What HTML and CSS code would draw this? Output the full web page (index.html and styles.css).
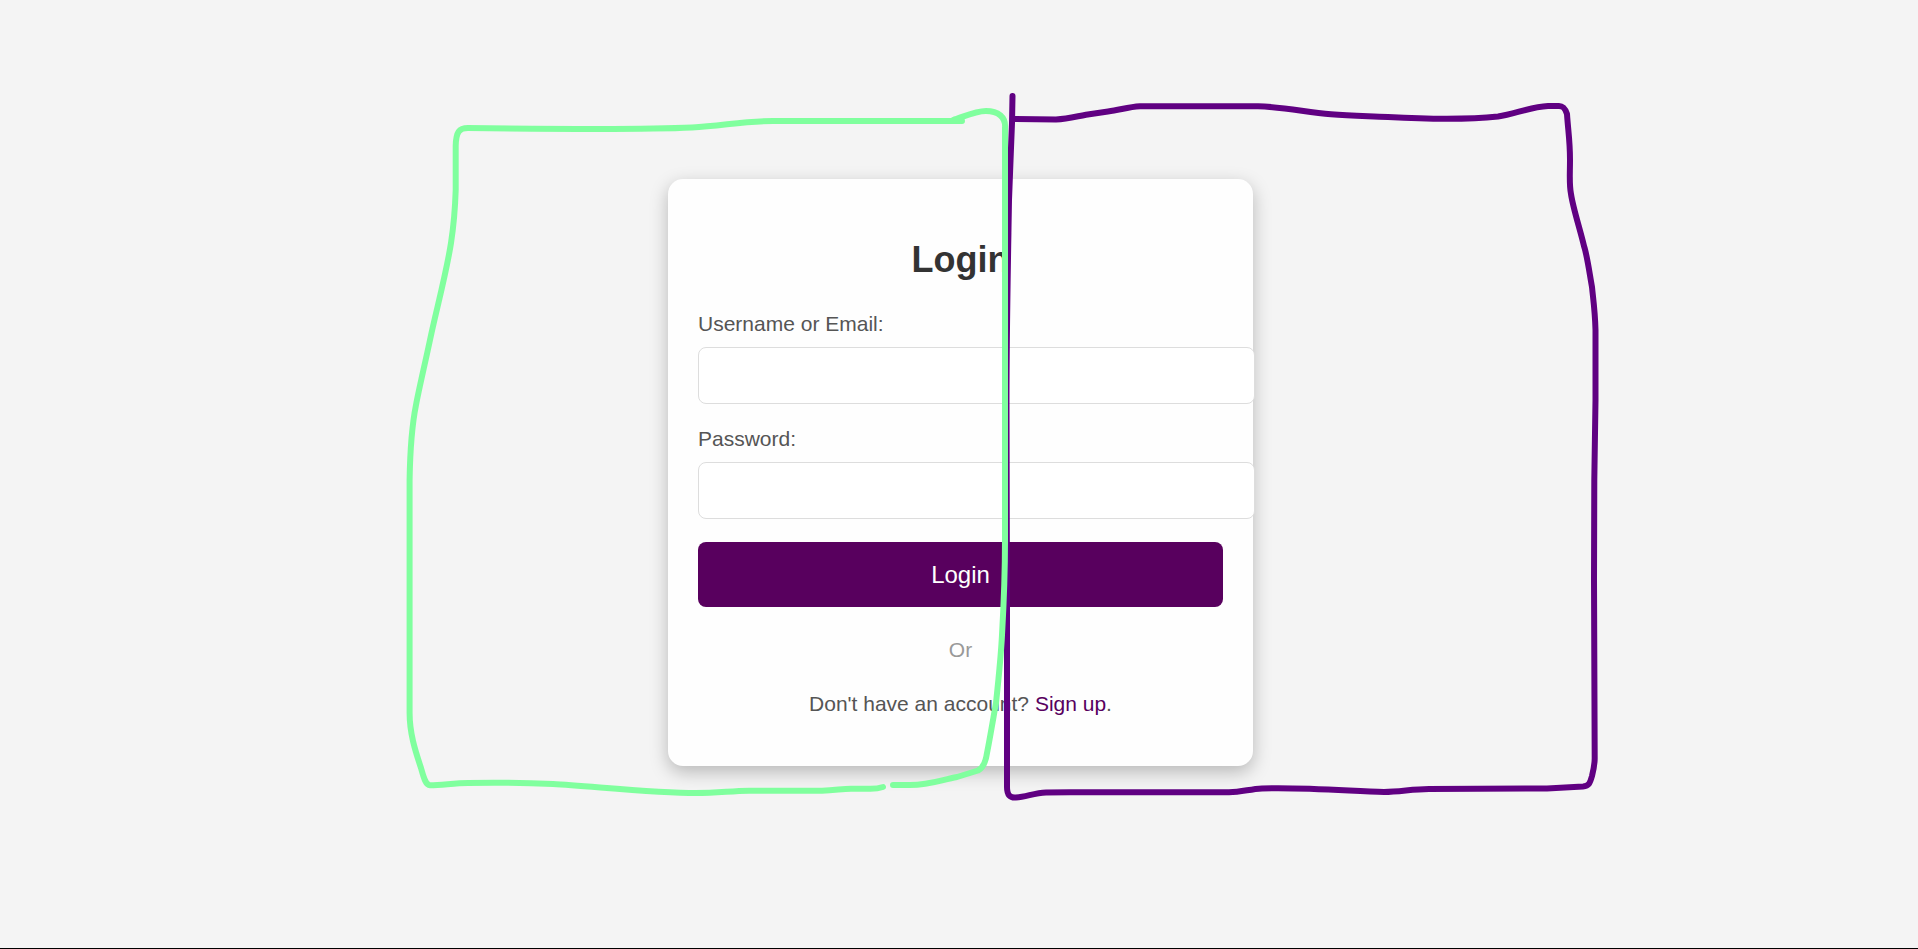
FILE: index.html
```html
<!DOCTYPE html>
<html lang="en">
<head>
<meta charset="utf-8">
<meta name="viewport" content="width=device-width, initial-scale=1">
<title>Login</title>
<link rel="stylesheet" href="styles.css">
</head>
<body>
<main class="page">
  <section class="card">
    <h1 class="card-title">Login</h1>
    <form class="form">
      <div class="field">
        <label class="field-label" for="username">Username or Email:</label>
        <input class="field-input" type="text" id="username" name="username">
      </div>
      <div class="field">
        <label class="field-label" for="password">Password:</label>
        <input class="field-input" type="password" id="password" name="password">
      </div>
      <button class="submit" type="submit">Login</button>
    </form>
    <p class="divider">Or</p>
    <p class="signup">Don't have an account? <a class="signup-link" href="#signup">Sign up</a>.</p>
  </section>
</main>
<svg class="ink" viewBox="0 0 1918 949" aria-hidden="true">
  <g class="ink-purple">
    <path d="M1012.500 96L1012 123C1011 150 1010 170 1009 200C1008 260 1006.500 330 1006.500 400L1007 613V787C1007 795 1010 798 1016 797.500C1026 797 1034 793 1046 792.500L1070 792.300H1229C1242 792 1250 789 1262 788.400C1305 787 1350 791 1384 792C1400 792 1412 789 1429 789L1547 788.400L1583 786.500C1589 786 1590 783 1592 776C1594 768 1594.700 764 1594.700 758L1594 580L1594.300 480L1595.500 400V330C1595 310 1593 298 1592 287C1589 270 1587 255 1584 246C1580 229 1573 208 1571 194C1569 184 1570 175 1570 160C1570 140 1568 130 1567 114C1565 108 1563 106 1559 106H1548C1530 107 1515 114 1498 116.500C1465 120 1425 119 1388 117C1365 116 1350 116 1331 114.300C1305 112 1285 107 1258 106.300H1140C1128 107 1120 110 1108 111.500L1086 114.700C1074 117 1067 119 1056 119.500L1014 119"/>
  </g>
  <g class="ink-green">
    <path d="M962 121H773C743 121 722 126 692 127.500C640 130 550 129 468 128C459 128 456 132 455.700 146V190C455 212 453 230 451 243C446 275 436 311 430 340C424 368 419 389 416 405C411 430 410 455 409.600 480V713C409.600 733 415 750 421 768C424 779 426 785 430 785.300C443 785 455 783 468 783C500 782.500 530 783 553 784C590 786 655 793 696 793C718 793 730 791 749 790.700H822C835 790.700 841 788.700 851 788.700H868C876 789 880 788 883 787"/>
    <path d="M893 785H910C930 785 941 780 957 777L978 770.500C983 768 986 760 987 753C990 738 994 714 996 703C999 675 1001 655 1002 635C1004 600 1005 575 1005 540V128C1006 117 998 111 986 111C975 111 963 117 953 120"/>
  </g>
</svg>
</body>
</html>
```
FILE: styles.css
```css
* {
  box-sizing: border-box;
}

body {
  margin: 0;
  font-family: Arial, "Liberation Sans", sans-serif;
  font-size: 21px;
  line-height: 24px;
  color: #555;
  background: #f4f4f4;
}

.page {
  display: flex;
  align-items: center;
  justify-content: center;
  min-height: 100vh;
  padding: 0 0 3px 3px;
  border-bottom: 1px solid #000;
}

.card {
  width: 585px;
  padding: 60px 30px 50px;
  background: #fefefe;
  border-radius: 15px;
  box-shadow: 0 6px 18px rgba(0, 0, 0, 0.25);
}

.card-title {
  margin: 0 0 32px;
  font-size: 36px;
  line-height: 41px;
  text-align: center;
  color: #333;
}

.form {
  display: flex;
  flex-direction: column;
  gap: 23px;
}

.field {
  display: flex;
  flex-direction: column;
  gap: 11px;
}

.field-input {
  width: calc(100% + 32px);
  height: 57px;
  padding: 15px;
  font: inherit;
  color: #333;
  background: #fff;
  border: 1px solid #ddd;
  border-radius: 8px;
}

.submit {
  padding: 18px;
  font: inherit;
  font-size: 24px;
  line-height: 29px;
  color: #fff;
  background: #58005e;
  border: 0;
  border-radius: 8px;
}

.divider {
  margin: 31px 0 30px;
  text-align: center;
  color: #999;
}

.signup {
  margin: 0;
  text-align: center;
}

.signup-link {
  color: #58005e;
  text-decoration: none;
}

.ink {
  position: absolute;
  inset: 0;
  width: 100%;
  height: 100%;
  fill: none;
  stroke-width: 6px;
  stroke-linecap: round;
  stroke-linejoin: round;
  pointer-events: none;
}

.ink-purple {
  stroke: #600082;
}

.ink-green {
  stroke: #80ff9e;
}
```
